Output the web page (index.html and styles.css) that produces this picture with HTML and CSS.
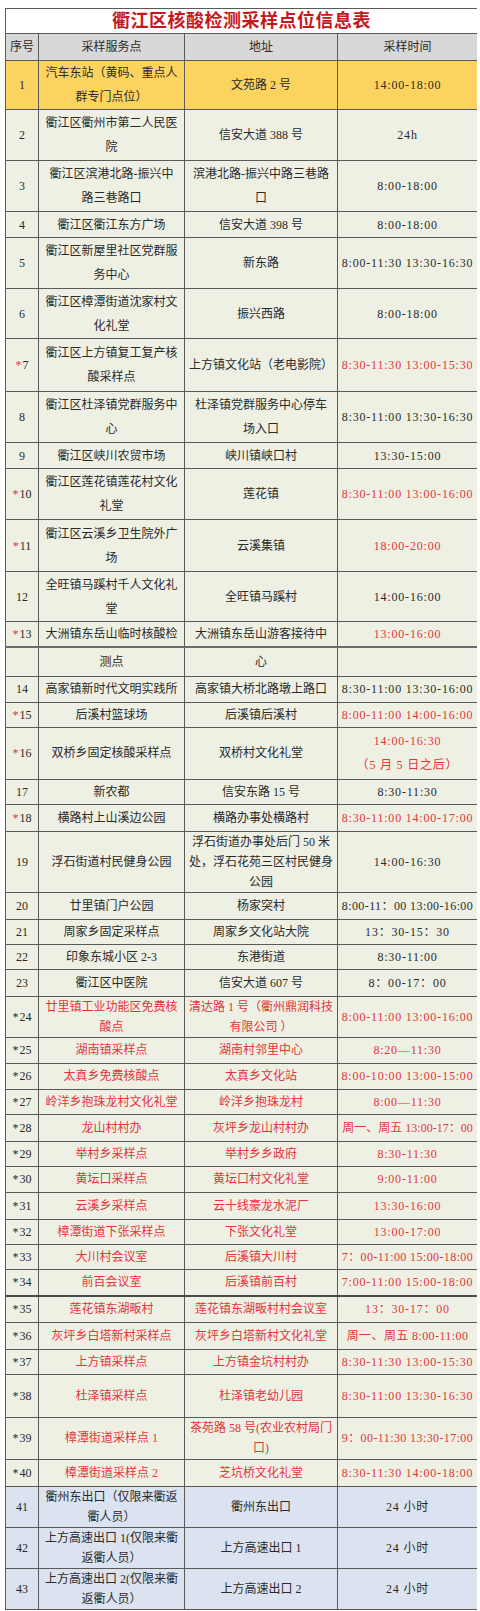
FILE: index.html
```html
<!DOCTYPE html>
<html lang="zh-CN">
<head>
<meta charset="utf-8">
<title>衢江区核酸检测采样点位信息表</title>
<link rel="stylesheet" href="styles.css">
</head>
<body>
<table class="sheet">
  <colgroup><col class="c-no"><col class="c-site"><col class="c-addr"><col class="c-time"></colgroup>
  <tr class="title-row h25"><td colspan="4" class="title">衢江区核酸检测采样点位信息表</td></tr>
  <tr class="head h27"><td>序号</td><td>采样服务点</td><td>地址</td><td>采样时间</td></tr>
  <tr class="yellow h46"><td>1</td><td>汽车东站（黄码、重点人<br>群专门点位）</td><td>文苑路 2 号</td><td>14:00-18:00</td></tr>
  <tr class="h51"><td>2</td><td>衢江区衢州市第二人民医<br>院</td><td>信安大道 388 号</td><td>24h</td></tr>
  <tr class="h51"><td>3</td><td>衢江区滨港北路-振兴中<br>路三巷路口</td><td>滨港北路-振兴中路三巷路<br>口</td><td>8:00-18:00</td></tr>
  <tr class="h26"><td>4</td><td>衢江区衢江东方广场</td><td>信安大道 398 号</td><td>8:00-18:00</td></tr>
  <tr class="h51"><td>5</td><td>衢江区新屋里社区党群服<br>务中心</td><td>新东路</td><td>8:00-11:30 13:30-16:30</td></tr>
  <tr class="h50"><td>6</td><td>衢江区樟潭街道沈家村文<br>化礼堂</td><td>振兴西路</td><td>8:00-18:00</td></tr>
  <tr class="h53"><td><span class="star">*</span>7</td><td>衢江区上方镇复工复产核<br>酸采样点</td><td>上方镇文化站（老电影院）</td><td class="red">8:30-11:30 13:00-15:30</td></tr>
  <tr class="h51"><td>8</td><td>衢江区杜泽镇党群服务中<br>心</td><td>杜泽镇党群服务中心停车<br>场入口</td><td>8:30-11:00 13:30-16:30</td></tr>
  <tr class="h26"><td>9</td><td>衢江区峡川农贸市场</td><td>峡川镇峡口村</td><td>13:30-15:00</td></tr>
  <tr class="h51"><td><span class="star">*</span>10</td><td>衢江区莲花镇莲花村文化<br>礼堂</td><td>莲花镇</td><td class="red">8:30-11:00 13:00-16:00</td></tr>
  <tr class="h52"><td><span class="star">*</span>11</td><td>衢江区云溪乡卫生院外广<br>场</td><td>云溪集镇</td><td class="red">18:00-20:00</td></tr>
  <tr class="h50"><td>12</td><td>全旺镇马蹊村千人文化礼<br>堂</td><td>全旺镇马蹊村</td><td>14:00-16:00</td></tr>
  <tr class="h25"><td><span class="star">*</span>13</td><td>大洲镇东岳山临时核酸检</td><td>大洲镇东岳山游客接待中</td><td class="red">13:00-16:00</td></tr>
  <tr class="h29 split"><td></td><td>测点</td><td>心</td><td></td></tr>
  <tr class="h26"><td>14</td><td>高家镇新时代文明实践所</td><td>高家镇大桥北路墩上路口</td><td>8:30-11:00 13:30-16:00</td></tr>
  <tr class="h25"><td><span class="star">*</span>15</td><td>后溪村篮球场</td><td>后溪镇后溪村</td><td class="red">8:00-11:00 14:00-16:00</td></tr>
  <tr class="h52"><td><span class="star">*</span>16</td><td>双桥乡固定核酸采样点</td><td>双桥村文化礼堂</td><td class="red">14:00-16:30<br>（5 月 5 日之后）</td></tr>
  <tr class="h25"><td>17</td><td>新农都</td><td>信安东路 15 号</td><td>8:30-11:30</td></tr>
  <tr class="h27"><td><span class="star">*</span>18</td><td>横路村上山溪边公园</td><td>横路办事处横路村</td><td class="red">8:30-11:00 14:00-17:00</td></tr>
  <tr class="h61 tight"><td>19</td><td>浮石街道村民健身公园</td><td>浮石街道办事处后门 50 米<br>处，浮石花苑三区村民健身<br>公园</td><td>14:00-16:30</td></tr>
  <tr class="h27"><td>20</td><td>廿里镇门户公园</td><td>杨家突村</td><td class="ls04">8:00-11：00 13:00-16:00</td></tr>
  <tr class="h25"><td>21</td><td>周家乡固定采样点</td><td>周家乡文化站大院</td><td>13：30-15：30</td></tr>
  <tr class="h25"><td>22</td><td>印象东城小区 2-3</td><td>东港街道</td><td>8:30-11:00</td></tr>
  <tr class="h27"><td>23</td><td>衢江区中医院</td><td>信安大道 607 号</td><td>8：00-17：00</td></tr>
  <tr class="h41 tight redrow"><td><span class="dstar">*</span>24</td><td>廿里镇工业功能区免费核<br>酸点</td><td>清达路 1 号（衢州鼎润科技<br>有限公司 ）</td><td>8:00-11:00 13:00-16:00</td></tr>
  <tr class="h26 redrow"><td><span class="dstar">*</span>25</td><td>湖南镇采样点</td><td>湖南村邻里中心</td><td>8:20—11:30</td></tr>
  <tr class="h26 redrow"><td><span class="dstar">*</span>26</td><td>太真乡免费核酸点</td><td>太真乡文化站</td><td>8:00-10:00 13:00-15:00</td></tr>
  <tr class="h25 redrow"><td><span class="dstar">*</span>27</td><td>岭洋乡抱珠龙村文化礼堂</td><td>岭洋乡抱珠龙村</td><td>8:00—11:30</td></tr>
  <tr class="h27 redrow"><td><span class="dstar">*</span>28</td><td>龙山村村办</td><td>灰坪乡龙山村村办</td><td class="ls0">周一、周五 13:00-17：00</td></tr>
  <tr class="h25 redrow"><td><span class="dstar">*</span>29</td><td>举村乡采样点</td><td>举村乡乡政府</td><td>8:30-11:30</td></tr>
  <tr class="h26 redrow"><td><span class="dstar">*</span>30</td><td>黄坛口采样点</td><td>黄坛口村文化礼堂</td><td>9:00-11:00</td></tr>
  <tr class="h27 redrow"><td><span class="dstar">*</span>31</td><td>云溪乡采样点</td><td>云十线豪龙水泥厂</td><td>13:30-16:00</td></tr>
  <tr class="h25 redrow"><td><span class="dstar">*</span>32</td><td>樟潭街道下张采样点</td><td>下张文化礼堂</td><td>13:00-17:00</td></tr>
  <tr class="h25 redrow"><td><span class="dstar">*</span>33</td><td>大川村会议室</td><td>后溪镇大川村</td><td class="ls04">7：00-11:00 15:00-18:00</td></tr>
  <tr class="h27 redrow"><td><span class="dstar">*</span>34</td><td>前百会议室</td><td>后溪镇前百村</td><td>7:00-11:00 15:00-18:00</td></tr>
  <tr class="h26 redrow thick"><td><span class="dstar">*</span>35</td><td>莲花镇东湖畈村</td><td>莲花镇东湖畈村村会议室</td><td>13：30-17：00</td></tr>
  <tr class="h27 redrow"><td><span class="dstar">*</span>36</td><td>灰坪乡白塔新村采样点</td><td>灰坪乡白塔新村文化礼堂</td><td class="ls04">周一、周五 8:00-11:00</td></tr>
  <tr class="h25 redrow"><td><span class="dstar">*</span>37</td><td>上方镇采样点</td><td>上方镇金坑村村办</td><td>8:30-11:30 13:00-15:30</td></tr>
  <tr class="h43 redrow"><td><span class="dstar">*</span>38</td><td>杜泽镇采样点</td><td>杜泽镇老幼儿园</td><td>8:30-11:00 13:30-16:30</td></tr>
  <tr class="h42 tight redrow"><td><span class="dstar">*</span>39</td><td>樟潭街道采样点 1</td><td>茶苑路 58 号(农业农村局门<br>口)</td><td class="ls04">9：00-11:30 13:30-17:00</td></tr>
  <tr class="h27 redrow"><td><span class="dstar">*</span>40</td><td>樟潭街道采样点 2</td><td>芝坑桥文化礼堂</td><td>8:30-11:30 14:00-18:00</td></tr>
  <tr class="h40 tight blue"><td>41</td><td>衢州东出口（仅限来衢返<br>衢人员）</td><td>衢州东出口</td><td>24 小时</td></tr>
  <tr class="h40 tight blue"><td>42</td><td>上方高速出口 1(仅限来衢<br>返衢人员）</td><td>上方高速出口 1</td><td>24 小时</td></tr>
  <tr class="h40 tight blue"><td>43</td><td>上方高速出口 2(仅限来衢<br>返衢人员）</td><td>上方高速出口 2</td><td>24 小时</td></tr>
</table>
</body>
</html>
```
FILE: styles.css
```css
html, body {
  background: #ffffff;
}
body {
  margin: 8px 3px 0 5px;
  font-family: "Liberation Serif", "Noto Sans CJK SC", serif;
  font-size: 12px;
  color: #2a2a2a;
}
.sheet {
  width: 472px;
  table-layout: fixed;
  border-collapse: collapse;
  background: #eef0e4;
}
.c-no { width: 33px; }
.c-site { width: 146px; }
.c-addr { width: 153px; }
.c-time { width: 140px; }
.sheet td {
  border: 1px solid #5a5a5a;
  padding: 0 1px;
  text-align: center;
  vertical-align: middle;
  white-space: nowrap;
  line-height: 24px;
  overflow: hidden;
}
.sheet td:nth-child(4) { letter-spacing: 0.8px; }
.sheet td.ls0 { letter-spacing: 0; }
.sheet td.ls04 { letter-spacing: 0.4px; }
.sheet tr.tight td { line-height: 20px; }
.title-row td {
  background: #ffffff;
  color: #c8161d;
  font-size: 18px;
  font-weight: bold;
  line-height: 24px;
  letter-spacing: 0.5px;
}
.head td { background: #d8d8d8; }
.sheet .head td:nth-child(4) { letter-spacing: 0; }
.yellow td { background: #fdd35f; }
.blue td { background: #dbe3f0; }
.red, .redrow td { color: #e5343a; }
.redrow td:first-child { color: #2a2a2a; }
.star { color: #e5343a; margin-right: 1px; }
.dstar { color: #2a2a2a; margin-right: 1px; }
.thick td { border-top: 2px solid #4a4a4a; }
.split td { border-top: 2px solid #6a6a6a; }
.h25 { height: 25px; }
.h26 { height: 26px; }
.h27 { height: 27px; }
.h29 { height: 29px; }
.h40 { height: 40px; }
.h41 { height: 41px; }
.h42 { height: 42px; }
.h43 { height: 43px; }
.h46 { height: 46px; }
.h50 { height: 50px; }
.h51 { height: 51px; }
.h52 { height: 52px; }
.h53 { height: 53px; }
.h61 { height: 61px; }
```
